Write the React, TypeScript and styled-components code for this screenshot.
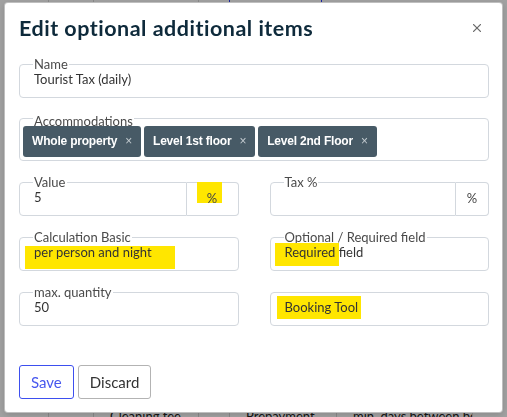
import React from 'react';
import styled, { createGlobalStyle } from 'styled-components';

const GlobalStyle = createGlobalStyle`
  html, body { margin: 0; padding: 0; height: 100%; overflow: hidden; }
  body { font-family: Lato, "Liberation Sans", sans-serif; background: #fff; }
  #root { height: 100%; }
`;

/* ---------- background page (behind the overlay) ---------- */
const Page = styled.div`
  height: 417px;
  display: flex;
  flex-direction: column;
  justify-content: space-between;
  background: #fff;
`;

const BgRow = styled.div<{ $cols: string; $h: number }>`
  display: grid;
  grid-template-columns: ${(p) => p.$cols};
  height: ${(p) => p.$h}px;
`;

const BgCell = styled.div<{ $accent?: boolean }>`
  border-right: 1px solid ${(p) => (p.$accent ? '#2b3bff' : '#d9d9d9')};
  font-size: 13px;
  line-height: 16px;
  color: #222;
  padding-left: 16px;
  white-space: nowrap;
  overflow: hidden;
`;

const Overlay = styled.div`
  position: fixed;
  inset: 0;
  background: rgba(0, 0, 0, 0.37);
`;

/* ---------- modal ---------- */
const Modal = styled.div`
  position: fixed;
  left: 4px;
  top: 2px;
  width: 499px;
  height: 411px;
  box-sizing: border-box;
  background: #fff;
  border: 1px solid rgba(0, 0, 0, 0.25);
  border-radius: 4px;
  box-shadow: 0 2px 6px rgba(0, 0, 0, 0.15);
  padding: 13px 13px 0 14px;
  display: flex;
  flex-direction: column;
`;

const Header = styled.div`
  display: flex;
  justify-content: space-between;
  align-items: flex-start;
`;

const Title = styled.h2`
  margin: 0;
  font-family: Lato, "Liberation Sans", sans-serif;
  font-weight: 700;
  font-size: 21.5px;
  letter-spacing: 0.5px;
  line-height: 25px;
  color: #0e2a3b;
`;

const CloseButton = styled.button`
  border: 0;
  padding: 0;
  background: none;
  margin: 8px 8px 0 0;
  width: 8px;
  height: 8px;
  display: flex;
  cursor: pointer;
`;

const Form = styled.div`
  margin-top: 16px;
  display: grid;
  grid-template-columns: 1fr 1fr;
  gap: 14px 31px;
`;

const Wide = styled.div`
  grid-column: 1 / -1;
`;

const Field = styled.fieldset<{ $flatRight?: boolean; $chips?: boolean }>`
  margin: 0;
  min-width: 0;
  flex: 1;
  padding: ${(p) => (p.$chips ? '0 3px 3px' : '0 14px 10px')};
  border: 1px solid #d3d8de;
  border-radius: ${(p) => (p.$flatRight ? '4px 0 0 4px' : '4px')};
`;

const Legend = styled.legend<{ $chips?: boolean }>`
  padding: ${(p) => (p.$chips ? '5px 1px 0' : '0 1px')};
  margin-left: ${(p) => (p.$chips ? '10px' : '-1px')};
  font-size: 13px;
  line-height: ${(p) => (p.$chips ? '8.5px' : '15px')};
  color: #4a4a4a;
  white-space: nowrap;
`;

const BlankLegend = styled.legend`
  padding: 0;
  height: 15px;
`;

const Value = styled.div`
  font-size: 13px;
  line-height: 15px;
  min-height: 15px;
  color: #333;
  white-space: nowrap;
`;

const InputGroup = styled.div`
  display: flex;
  align-items: stretch;
`;

const Addon = styled.div<{ $w: number }>`
  margin-top: 7.5px;
  width: ${(p) => p.$w}px;
  box-sizing: border-box;
  border: 1px solid #d3d8de;
  border-left: 0;
  border-radius: 0 4px 4px 0;
  display: flex;
  align-items: center;
  justify-content: center;
  font-size: 13px;
  line-height: 15px;
  color: #444;
`;

const Mark = styled.span<{ $t: number; $r: number; $b: number; $l: number }>`
  position: relative;
  z-index: 0;
  &::before {
    content: '';
    position: absolute;
    z-index: -1;
    top: ${(p) => p.$t}px;
    right: ${(p) => p.$r}px;
    bottom: ${(p) => p.$b}px;
    left: ${(p) => p.$l}px;
    background: #ffe600;
  }
`;

const ChipList = styled.div`
  display: flex;
  gap: 3px;
`;

const Chip = styled.span`
  height: 31px;
  box-sizing: border-box;
  display: inline-flex;
  align-items: center;
  gap: 8px;
  padding: 0 9px;
  background: #475a66;
  color: #fff;
  border-radius: 3px;
  font-family: "Liberation Sans", Arial, sans-serif;
  font-weight: 700;
  font-size: 12px;
  letter-spacing: -0.2px;
  white-space: nowrap;
`;

const ChipRemove = styled.span`
  font-family: "Liberation Sans", Arial, sans-serif;
  font-weight: 400;
  font-size: 12px;
  color: #c3cbd0;
`;

const Actions = styled.div`
  margin-top: 39px;
  display: flex;
  gap: 4px;
`;

const Button = styled.button<{ $primary?: boolean }>`
  height: 34px;
  padding: 0 11px;
  border-radius: 3px;
  background: #fff;
  font-family: Lato, "Liberation Sans", sans-serif;
  font-size: 15px;
  border: 1px solid ${(p) => (p.$primary ? '#3d4fef' : '#b3b3b3')};
  color: ${(p) => (p.$primary ? '#4757ee' : '#333')};
  cursor: pointer;
`;

const chips = ['Whole property', 'Level 1st floor', 'Level 2nd Floor'];

export default function App() {
  return (
    <>
      <GlobalStyle />
      <Page>
        <BgRow $cols="49px 45px 105px 31px 92px 1fr" $h={3}>
          <BgCell />
          <BgCell />
          <BgCell />
          <BgCell $accent />
          <BgCell $accent />
          <div />
        </BgRow>
        <BgRow $cols="49px 45px 105px 31px 107px 136px 1fr" $h={9}>
          <BgCell />
          <BgCell />
          <BgCell>Cleaning fee</BgCell>
          <BgCell />
          <BgCell>Prepayment</BgCell>
          <BgCell>min. days between bookings</BgCell>
          <div />
        </BgRow>
      </Page>
      <Overlay />
      <Modal role="dialog" aria-label="Edit optional additional items">
        <Header>
          <Title>Edit optional additional items</Title>
          <CloseButton aria-label="Close">
            <svg width="8" height="8" viewBox="0 0 8 8">
              <path d="M0.6 0.6 L7.4 7.4 M7.4 0.6 L0.6 7.4" stroke="#6b6b6b" strokeWidth="1.3" strokeLinecap="round" />
            </svg>
          </CloseButton>
        </Header>

        <Form>
          <Wide>
            <Field>
              <Legend>Name</Legend>
              <Value>Tourist Tax (daily)</Value>
            </Field>
          </Wide>

          <Wide>
            <Field $chips>
              <Legend $chips>Accommodations</Legend>
              <ChipList>
                {chips.map((c) => (
                  <Chip key={c}>
                    {c}
                    <ChipRemove>×</ChipRemove>
                  </Chip>
                ))}
              </ChipList>
            </Field>
          </Wide>

          <InputGroup>
            <Field $flatRight>
              <Legend>Value</Legend>
              <Value>5</Value>
            </Field>
            <Addon $w={52}>
              <Mark $t={-9} $r={-5} $b={3} $l={-10}>%</Mark>
            </Addon>
          </InputGroup>

          <InputGroup>
            <Field $flatRight>
              <Legend>Tax %</Legend>
              <Value />
            </Field>
            <Addon $w={33}>%</Addon>
          </InputGroup>

          <Field>
            <Legend>Calculation Basic</Legend>
            <Value>
              <Mark $t={2} $r={-23} $b={-9} $l={-9}>per person and night</Mark>
            </Value>
          </Field>

          <Field>
            <Legend>Optional / Required field</Legend>
            <Value>
              <Mark $t={-1} $r={-4} $b={-6} $l={-10}>Required</Mark> field
            </Value>
          </Field>

          <Field>
            <Legend>max. quantity</Legend>
            <Value>50</Value>
          </Field>

          <Field>
            <BlankLegend />
            <Value>
              <Mark $t={-3} $r={-3} $b={-4} $l={-8}>Booking Tool</Mark>
            </Value>
          </Field>
        </Form>

        <Actions>
          <Button $primary>Save</Button>
          <Button>Discard</Button>
        </Actions>
      </Modal>
    </>
  );
}
